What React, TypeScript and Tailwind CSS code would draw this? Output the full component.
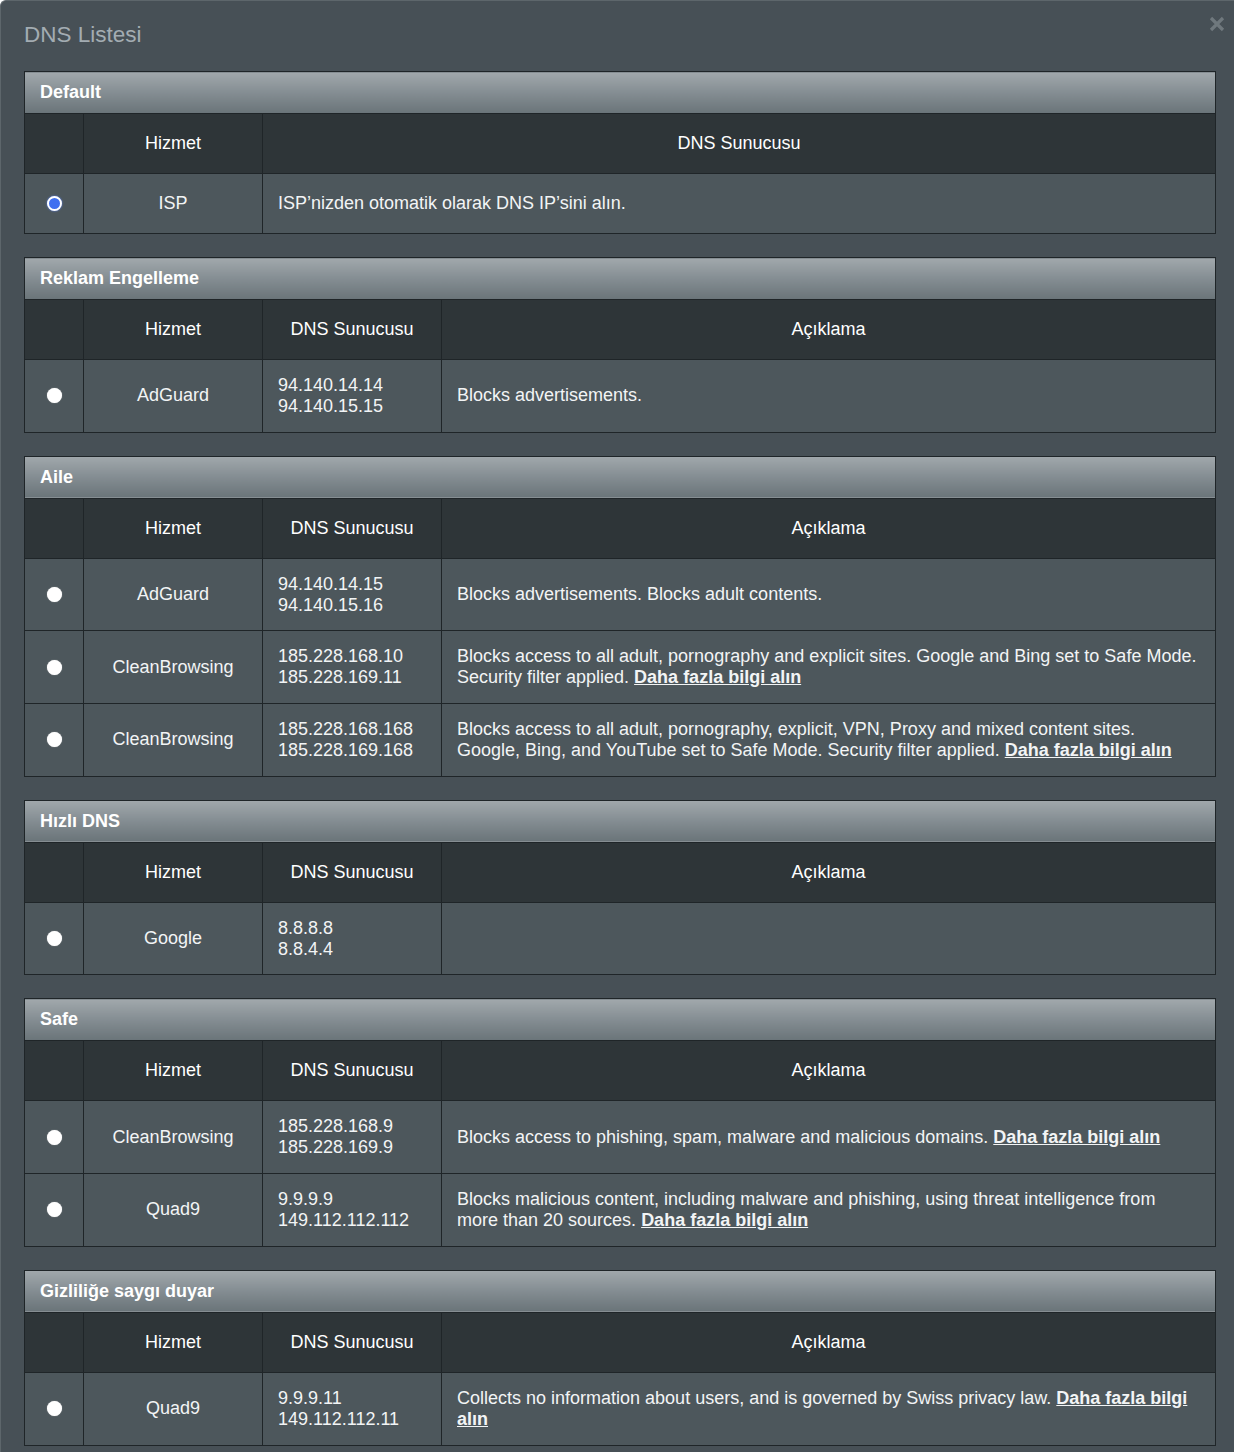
import React from 'react'

type Row = {
  service: string
  servers: string[]
  desc?: string
  link?: string
  selected?: boolean
}

type Group = {
  title: string
  simple?: boolean
  rows: Row[]
}

const LINK = 'Daha fazla bilgi alın'

const groups: Group[] = [
  {
    title: 'Default',
    simple: true,
    rows: [{ service: 'ISP', servers: [], desc: 'ISP’nizden otomatik olarak DNS IP’sini alın.', selected: true }],
  },
  {
    title: 'Reklam Engelleme',
    rows: [{ service: 'AdGuard', servers: ['94.140.14.14', '94.140.15.15'], desc: 'Blocks advertisements.' }],
  },
  {
    title: 'Aile',
    rows: [
      { service: 'AdGuard', servers: ['94.140.14.15', '94.140.15.16'], desc: 'Blocks advertisements. Blocks adult contents.' },
      {
        service: 'CleanBrowsing',
        servers: ['185.228.168.10', '185.228.169.11'],
        desc: 'Blocks access to all adult, pornography and explicit sites. Google and Bing set to Safe Mode. Security filter applied.',
        link: LINK,
      },
      {
        service: 'CleanBrowsing',
        servers: ['185.228.168.168', '185.228.169.168'],
        desc: 'Blocks access to all adult, pornography, explicit, VPN, Proxy and mixed content sites. Google, Bing, and YouTube set to Safe Mode. Security filter applied.',
        link: LINK,
      },
    ],
  },
  {
    title: 'Hızlı DNS',
    rows: [{ service: 'Google', servers: ['8.8.8.8', '8.8.4.4'] }],
  },
  {
    title: 'Safe',
    rows: [
      {
        service: 'CleanBrowsing',
        servers: ['185.228.168.9', '185.228.169.9'],
        desc: 'Blocks access to phishing, spam, malware and malicious domains.',
        link: LINK,
      },
      {
        service: 'Quad9',
        servers: ['9.9.9.9', '149.112.112.112'],
        desc: 'Blocks malicious content, including malware and phishing, using threat intelligence from more than 20 sources.',
        link: LINK,
      },
    ],
  },
  {
    title: 'Gizliliğe saygı duyar',
    rows: [
      {
        service: 'Quad9',
        servers: ['9.9.9.11', '149.112.112.11'],
        desc: 'Collects no information about users, and is governed by Swiss privacy law.',
        link: LINK,
      },
    ],
  },
]

function Radio({ checked }: { checked?: boolean }) {
  if (checked) {
    return <span className="inline-block w-[15px] h-[15px] rounded-full bg-[#3f6ff0] border-[2px] border-white shadow-[0_0_2px_#5b86ff]" />
  }
  return <span className="inline-block w-[15px] h-[15px] rounded-full bg-white shadow-[0_0_1px_#ccc]" />
}

const cell = 'border border-[#1f2528]'
const th = `${cell} h-[60px] font-normal text-center text-white`

function GroupTable({ group }: { group: Group }) {
  return (
    <table className="w-full table-fixed border-collapse mb-[23px] border border-[#1f2528]">
      <colgroup>
        <col className="w-[59px]" />
        <col className="w-[179px]" />
        {!group.simple && <col className="w-[179px]" />}
        <col />
      </colgroup>
      <thead>
        <tr>
          <th
            colSpan={group.simple ? 3 : 4}
            className={`${cell} h-[42px] pl-[15px] text-left font-bold text-white bg-gradient-to-b from-[#a1a8ac] via-[#848d92] to-[#6a7479]`}
          >
            {group.title}
          </th>
        </tr>
        <tr className="bg-[#2e3538]">
          <th className={th} />
          <th className={th}>Hizmet</th>
          <th className={th}>DNS Sunucusu</th>
          {!group.simple && <th className={th}>Açıklama</th>}
        </tr>
      </thead>
      <tbody>
        {group.rows.map((r, i) => (
          <tr key={i} className={`bg-[#4d575c] ${r.servers.length > 1 ? 'h-[72.7px]' : 'h-[60px]'}`}>
            <td className={`${cell} text-center align-middle`}>
              <span className="inline-flex translate-y-[2px]">
                <Radio checked={r.selected} />
              </span>
            </td>
            <td className={`${cell} text-center`}>{r.service}</td>
            {!group.simple && (
              <td className={`${cell} px-[15px]`}>
                {r.servers.map((s) => (
                  <div key={s}>{s}</div>
                ))}
              </td>
            )}
            <td className={`${cell} pl-[15px] pr-[16px]`}>
              {r.desc}
              {r.link && (
                <>
                  {' '}
                  <a className="font-bold underline">{r.link}</a>
                </>
              )}
            </td>
          </tr>
        ))}
      </tbody>
    </table>
  )
}

export default function App() {
  return (
    <div className="relative min-h-[1452px] w-[1234px] bg-[#475056] border-l border-t border-[#5d666b] rounded-tl-[6px] pl-[23px] pr-[18px] pb-[8px] text-[18px] leading-[21px] text-[#f2f4f5] font-['Liberation_Sans',Arial,sans-serif]">
      <div className="h-[70px] pt-[20px] text-[22.5px] leading-[28px] text-[#a3acb2]">DNS Listesi</div>
      <button className="absolute right-[9px] top-[15px] text-[#6f787d]">
        <svg width="16" height="16" viewBox="0 0 16 16" fill="none" stroke="currentColor" strokeWidth="3.2" strokeLinecap="butt">
          <path d="M2 2 L14 14 M14 2 L2 14" />
        </svg>
      </button>
      {groups.map((g) => (
        <GroupTable key={g.title} group={g} />
      ))}
    </div>
  )
}
